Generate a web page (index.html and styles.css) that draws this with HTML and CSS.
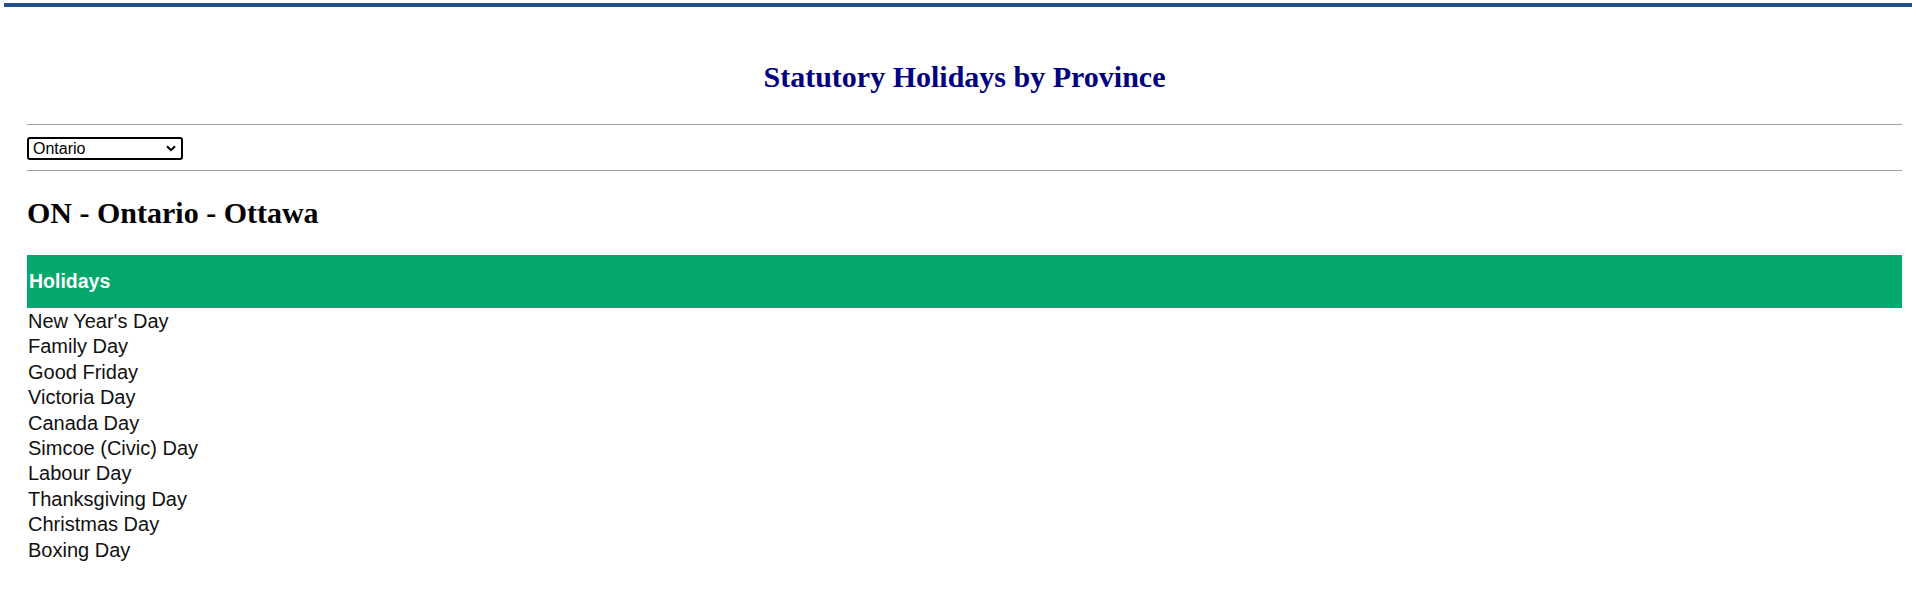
FILE: index.html
```html
<!DOCTYPE html>
<html lang="en">
<head>
<meta charset="utf-8">
<title>Statutory Holidays by Province</title>
<link rel="stylesheet" href="styles.css">
</head>
<body>
<div class="topbar"></div>
<main class="page">
  <h1 class="title">Statutory Holidays by Province</h1>
  <hr class="rule">
  <div class="picker">
    <select class="province">
      <option>Ontario</option>
    </select>
    <svg class="chev" width="10" height="7" viewBox="0 0 10 7"><path d="M1 1.2 L5 5.2 L9 1.2" fill="none" stroke="#000" stroke-width="2"/></svg>
  </div>
  <hr class="rule rule-b">
  <h2 class="region">ON - Ontario - Ottawa</h2>
  <table class="holidays">
    <thead><tr><th>Holidays</th></tr></thead>
    <tbody>
      <tr><td>New Year's Day</td></tr>
      <tr><td>Family Day</td></tr>
      <tr><td>Good Friday</td></tr>
      <tr><td>Victoria Day</td></tr>
      <tr><td>Canada Day</td></tr>
      <tr><td>Simcoe (Civic) Day</td></tr>
      <tr><td>Labour Day</td></tr>
      <tr><td>Thanksgiving Day</td></tr>
      <tr><td>Christmas Day</td></tr>
      <tr><td>Boxing Day</td></tr>
    </tbody>
  </table>
</main>
</body>
</html>
```

FILE: styles.css
```css
html, body {
  margin: 0;
  padding: 0;
  background: #fff;
}
body {
  font-family: "Liberation Serif", "Times New Roman", serif;
  color: #000;
}
.topbar {
  margin: 3px 0 0 4px;
  height: 4px;
  background: #1f5090;
}
.page {
  padding: 0 10px 0 27px;
}
.title {
  margin: 52px 0 0;
  font-size: 30px;
  line-height: 36px;
  font-weight: bold;
  color: #000080;
  text-align: center;
}
.rule {
  border: 0;
  height: 1px;
  background: #a0a0a0;
  margin: 29px 0 0;
}
.rule-b {
  margin-top: 10px;
}
.picker {
  position: relative;
  width: 156px;
  height: 23px;
  margin-top: 12px;
}
.province {
  appearance: none;
  -webkit-appearance: none;
  display: block;
  box-sizing: border-box;
  width: 156px;
  height: 23px;
  margin: 0;
  padding: 0 0 0 4px;
  border: 2px solid #000;
  border-radius: 3px;
  background: #fff;
  font-family: "Liberation Sans", Arial, sans-serif;
  font-size: 16px;
  line-height: 19px;
  color: #000;
}
.chev {
  position: absolute;
  right: 7px;
  top: 8px;
  pointer-events: none;
}
.region {
  margin: 24px 0 0;
  font-size: 30px;
  line-height: 36px;
  font-weight: bold;
}
.holidays {
  margin-top: 24px;
  width: 100%;
  border-collapse: collapse;
  font-family: "Liberation Sans", Arial, sans-serif;
}
.holidays th {
  background: #05a86c;
  color: #fff;
  text-align: left;
  font-size: 19.5px;
  font-weight: bold;
  height: 53px;
  line-height: 53px;
  padding: 0 0 0 2px;
}
.holidays td {
  font-size: 20px;
  line-height: 24.4px;
  padding: 1px 0 0 1px;
  color: #111;
}
```
